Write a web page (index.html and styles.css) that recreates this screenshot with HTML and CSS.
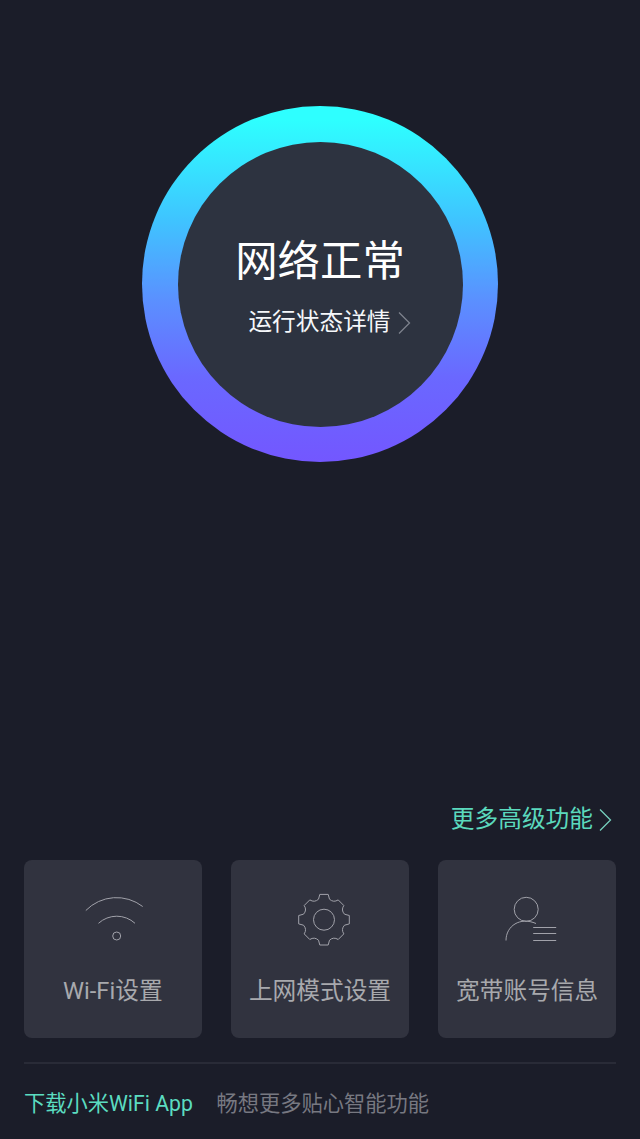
FILE: index.html
```html
<!DOCTYPE html>
<html lang="zh-CN">
<head>
<meta charset="utf-8">
<title>小米WiFi</title>
<link rel="stylesheet" href="styles.css">
</head>
<body>
<main class="page">
  <section class="status">
    <div class="ring">
      <div class="ring-inner">
        <h1 class="status-title">网络正常</h1>
        <a class="status-link">运行状态详情<svg class="chevron" viewBox="0 0 13 22"><path d="M1 0.500L11.500 11L1 21.500"/></svg></a>
      </div>
    </div>
  </section>
  <a class="more">更多高级功能<svg class="chevron" viewBox="0 0 13 22"><path d="M1 0.500L11.500 11L1 21.500"/></svg></a>
  <nav class="cards">
    <a class="card">
      <svg class="icon" viewBox="0 0 80 60"><path d="M12.800 20.500A43 43 0 0 1 69.700 16.500M25.500 33.300A27 27 0 0 1 62 33.300"/><circle cx="43.700" cy="46" r="4"/></svg>
      <span class="label">Wi-Fi设置</span>
    </a>
    <a class="card">
      <svg class="icon" viewBox="0 0 80 60"><g transform="translate(44 29.700)"><path d="M-4.200 -25.300H4.200L5.500 -20.500Q9.500 -16.800 14.200 -19.800L19.800 -14.200Q16.800 -9.500 20.500 -5.500L25.300 -4.200V4.200L20.500 5.500Q16.800 9.500 19.800 14.200L14.200 19.800Q9.500 16.800 5.500 20.500L4.200 25.300H-4.200L-5.500 20.500Q-9.500 16.800 -14.200 19.800L-19.800 14.200Q-16.800 9.500 -20.500 5.500L-25.300 4.200V-4.200L-20.500 -5.500Q-16.800 -9.500 -19.800 -14.200L-14.200 -19.800Q-9.500 -16.800 -5.500 -20.500Z"/><circle r="10.500"/></g></svg>
      <span class="label">上网模式设置</span>
    </a>
    <a class="card">
      <svg class="icon" viewBox="0 0 80 60"><circle cx="39.200" cy="19.300" r="12"/><path d="M19 50.500C19 36 33 26.500 49 33.500M46.200 37.500H69.200M46.200 43.500H69.200M46.200 50.500H69.200"/></svg>
      <span class="label">宽带账号信息</span>
    </a>
  </nav>
  <footer class="footer">
    <a class="download">下载小米WiFi App</a>
    <span class="hint">畅想更多贴心智能功能</span>
  </footer>
</main>
</body>
</html>
```
FILE: styles.css
```css
* { box-sizing: border-box; }
body {
  margin: 0;
  background: #1b1d29;
  font-family: Roboto, "Noto Sans CJK SC", sans-serif;
}
.page {
  height: 1139px;
  padding: 106px 24px 0;
  display: flex;
  flex-direction: column;
}
.status {
  height: 697px;
  display: flex;
  justify-content: center;
}
.ring {
  width: 356px;
  height: 356px;
  padding: 35.5px;
  border-radius: 50%;
  background: linear-gradient(#2effff 4%, #3fc4ff 32%, #5b8fff 55%, #6a68ff 76%, #7357ff);
}
.ring-inner {
  height: 100%;
  padding-top: 90px;
  border-radius: 50%;
  background: #2d3340;
  display: flex;
  flex-direction: column;
  align-items: center;
}
.status-title {
  margin: 0;
  font-size: 42.4px;
  line-height: 60px;
  font-weight: 400;
  color: #fff;
}
.status-link {
  display: flex;
  align-items: center;
  gap: 7px;
  margin-top: 14.5px;
  padding-left: 19px;
  font-size: 23.7px;
  line-height: 32px;
  color: #f5f7fa;
}
.chevron {
  width: 13px;
  height: 22px;
  margin-top: 2px;
  fill: none;
  stroke: #7d828c;
  stroke-width: 1.3;
}
.more {
  align-self: flex-end;
  display: flex;
  align-items: center;
  gap: 6px;
  height: 32px;
  margin-right: 4px;
  font-size: 23.7px;
  line-height: 32px;
  color: #5bd9bd;
}
.more .chevron { stroke: #76d0bd; }
.cards {
  display: grid;
  grid-template-columns: repeat(3, 1fr);
  gap: 29.5px;
  margin-top: 25px;
}
.card {
  height: 178px;
  padding-top: 30px;
  border-radius: 8px;
  background: #31333f;
  display: flex;
  flex-direction: column;
  align-items: center;
}
.icon {
  width: 80px;
  height: 60px;
  fill: none;
  stroke: #a1a2aa;
  stroke-width: 1;
}
.label {
  margin-top: 25px;
  font-size: 23.7px;
  line-height: 32px;
  color: #a8a9ad;
}
.footer {
  display: flex;
  gap: 23.5px;
  margin-top: 24px;
  padding-top: 24px;
  border-top: 2px solid #292b37;
  font-size: 21.25px;
  line-height: 32px;
}
.download { color: #5bdcc0; }
.hint { color: #777881; }
```
